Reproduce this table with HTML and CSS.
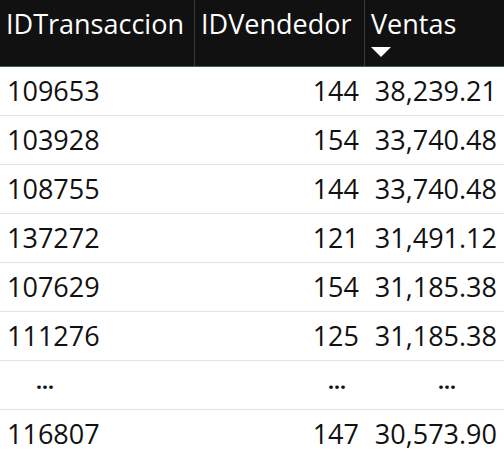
FILE: index.html
```html
<!DOCTYPE html>
<html>
<head>
<meta charset="utf-8">
<link rel="stylesheet" href="styles.css">
</head>
<body>
<div class="table">
  <div class="head">
    <div class="hc c1">IDTransaccion</div>
    <div class="hc c2">IDVendedor</div>
    <div class="hc c3">Ventas<span class="arrow"></span></div>
  </div>
  <div class="row"><div class="c1">109653</div><div class="c2 num">144</div><div class="c3 num">38,239.21</div></div>
  <div class="row"><div class="c1">103928</div><div class="c2 num">154</div><div class="c3 num">33,740.48</div></div>
  <div class="row"><div class="c1">108755</div><div class="c2 num">144</div><div class="c3 num">33,740.48</div></div>
  <div class="row"><div class="c1">137272</div><div class="c2 num">121</div><div class="c3 num">31,491.12</div></div>
  <div class="row"><div class="c1">107629</div><div class="c2 num">154</div><div class="c3 num">31,185.38</div></div>
  <div class="row"><div class="c1">111276</div><div class="c2 num">125</div><div class="c3 num">31,185.38</div></div>
  <div class="row dots"><div class="c1 d1">...</div><div class="c2 d2">...</div><div class="c3 d3">...</div></div>
  <div class="row last"><div class="c1">116807</div><div class="c2 num">147</div><div class="c3 num">30,573.90</div></div>
</div>
</body>
</html>
```
FILE: styles.css
```css
html, body { margin: 0; padding: 0; background: #fff; }
body { font-family: "Open Sans", "Noto Sans", sans-serif; font-size: 27px; color: #111; width: 504px; height: 461px; overflow: hidden; }
.table { display: flex; flex-direction: column; }
.head { display: grid; grid-template-columns: 195px 170px 139px; height: 66px; background: #111111; border-bottom: 1px solid #2f6b4b; color: #fff; }
.hc { padding: 2px 0 0 6px; line-height: 44px; position: relative; white-space: nowrap; }
.head .c1, .head .c2 { border-right: 1px solid #3a3a3a; }
.arrow { position: absolute; left: 6px; top: 47px; width: 0; height: 0; border-left: 10px solid transparent; border-right: 10px solid transparent; border-top: 10px solid #fff; }
.row { display: grid; grid-template-columns: 195px 170px 139px; height: 48px; border-bottom: 1px solid #e3e3e3; line-height: 48px; white-space: nowrap; }
.row.last { border-bottom: none; }
.row .c1 { padding-left: 7px; }
.num { text-align: right; padding-right: 6px; }
.row .c3.num { padding-right: 7px; }
.dots div { font-weight: 700; font-size: 21px; line-height: 40px; }
.d1 { padding-left: 36px !important; }
.d2 { text-align: right; padding-right: 19px; }
.d3 { text-align: right; padding-right: 48px; }
```
